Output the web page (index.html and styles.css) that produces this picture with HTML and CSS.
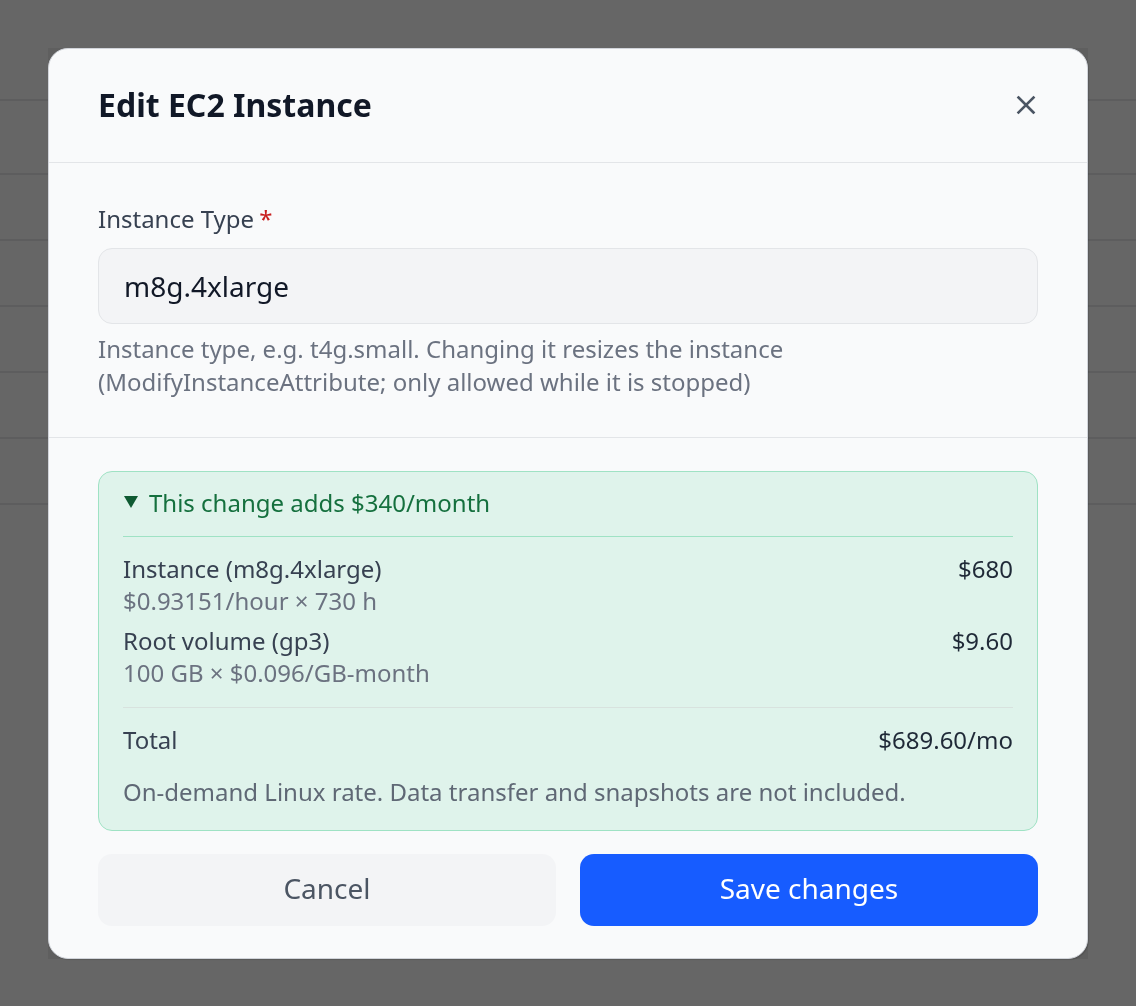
FILE: index.html
```html
<!DOCTYPE html>
<html lang="en">
<head>
<meta charset="utf-8">
<title>Edit EC2 Instance</title>
<link rel="stylesheet" href="styles.css">
</head>
<body>
<div class="page">
  <div class="bg-head"></div>
  <div class="bg-row bg-row-first"></div>
  <div class="bg-row"></div>
  <div class="bg-row"></div>
  <div class="bg-row"></div>
  <div class="bg-row"></div>
  <div class="bg-row"></div>
</div>
<div class="overlay">
  <div class="dialog-frame">
    <div class="dialog" role="dialog" aria-labelledby="dlg-title">
      <div class="dialog-header">
        <h2 class="dialog-title" id="dlg-title">Edit EC2 Instance</h2>
        <button class="close-btn" type="button" aria-label="Close">
          <svg width="24" height="24" viewBox="0 0 24 24" fill="none" stroke="#4b5563" stroke-width="2.6" stroke-linecap="square"><path d="M4.5 4.5L19.5 19.5M19.5 4.5L4.5 19.5"/></svg>
        </button>
      </div>
      <div class="section section-field">
        <label class="field-label" for="itype">Instance Type<span class="req">*</span></label>
        <div class="input" id="itype">m8g.4xlarge</div>
        <p class="help">Instance type, e.g. t4g.small. Changing it resizes the instance (ModifyInstanceAttribute; only allowed while it is stopped)</p>
      </div>
      <div class="section section-cost">
        <div class="cost-box">
          <div class="cost-summary">
            <span class="tri"></span>
            <span>This change adds $340/month</span>
          </div>
          <div class="cost-lines">
            <div class="cost-row">
              <div>
                <div class="cost-main">Instance (m8g.4xlarge)</div>
                <div class="cost-sub">$0.93151/hour × 730 h</div>
              </div>
              <div class="cost-amount">$680</div>
            </div>
            <div class="cost-row">
              <div>
                <div class="cost-main">Root volume (gp3)</div>
                <div class="cost-sub">100 GB × $0.096/GB-month</div>
              </div>
              <div class="cost-amount">$9.60</div>
            </div>
          </div>
          <div class="cost-total">
            <span class="cost-main">Total</span>
            <span class="cost-amount">$689.60/mo</span>
          </div>
          <p class="cost-note">On-demand Linux rate. Data transfer and snapshots are not included.</p>
        </div>
        <div class="actions">
          <button class="btn btn-cancel" type="button">Cancel</button>
          <button class="btn btn-save" type="button">Save changes</button>
        </div>
      </div>
    </div>
  </div>
</div>
</body>
</html>
```

FILE: styles.css
```css
html, body {
  margin: 0;
  padding: 0;
}
body {
  font-family: "Noto Sans", "Open Sans", sans-serif;
  background: #ffffff;
  width: 1136px;
  height: 1006px;
  overflow: hidden;
}
.page {
  background: #ffffff;
  height: 1006px;
}
.bg-head {
  height: 99px;
  border-bottom: 2px solid #e8e9eb;
}
.bg-row {
  height: 64px;
  border-bottom: 2px solid #e8e9eb;
}
.bg-row-first {
  height: 72px;
}
.overlay {
  position: fixed;
  inset: 0;
  background: rgba(0, 0, 0, 0.6);
  display: flex;
  align-items: center;
  justify-content: center;
}
.dialog-frame {
  background: rgba(0, 0, 0, 0.07);
}
.dialog {
  width: 1040px;
  box-sizing: border-box;
  background: #f9fafb;
  border: 1.5px solid #d1d4da;
  border-radius: 20px;
  box-shadow: 1px 1px 1px rgba(0, 0, 0, 0.14);
}
.dialog-header {
  height: 113px;
  padding: 0 49px;
  display: flex;
  align-items: center;
  justify-content: space-between;
  border-bottom: 1.5px solid #e3e5e8;
}
.dialog-title {
  margin: 0;
  font-size: 32px;
  line-height: 42px;
  font-weight: 700;
  color: #111827;
}
.close-btn {
  border: 0;
  background: transparent;
  padding: 0;
  width: 24px;
  height: 24px;
  display: flex;
  cursor: pointer;
}
.section {
  padding-left: 49px;
  padding-right: 49px;
}
.section-field {
  padding-top: 38px;
  padding-bottom: 39px;
  border-bottom: 1.5px solid #e3e5e8;
}
.field-label {
  display: block;
  font-size: 24px;
  line-height: 36px;
  color: #374151;
  margin-bottom: 11px;
}
.req {
  color: #c81e1e;
  margin-left: 5px;
}
.input {
  height: 76px;
  box-sizing: border-box;
  border: 1.5px solid #e3e5e8;
  background: #f3f4f6;
  border-radius: 14px;
  padding: 0 25px;
  display: flex;
  align-items: center;
  font-size: 28px;
  color: #111827;
}
.help {
  margin: 8px 0 0;
  font-size: 24px;
  line-height: 33px;
  color: #6b7280;
}
.section-cost {
  padding-top: 33px;
  padding-bottom: 32px;
}
.cost-box {
  border: 1.5px solid #9fe2c4;
  background: #dff3eb;
  border-radius: 14px;
  padding: 14px 24px 22px;
  font-size: 24px;
}
.cost-summary {
  display: flex;
  align-items: center;
  gap: 11px;
  line-height: 33px;
  color: #15703e;
  padding-bottom: 17px;
  border-bottom: 1.5px solid #9fe2c4;
}
.tri {
  width: 0;
  height: 0;
  border-left: 7px solid transparent;
  border-right: 7px solid transparent;
  border-top: 12px solid #0f5a32;
  margin-left: 1px;
}
.cost-lines {
  padding-top: 16px;
  padding-bottom: 18px;
  display: flex;
  flex-direction: column;
  gap: 8px;
  border-bottom: 1.5px solid #d8e2de;
}
.cost-row {
  display: flex;
  justify-content: space-between;
  align-items: flex-start;
}
.cost-main {
  line-height: 32px;
  color: #374151;
}
.cost-sub {
  line-height: 32px;
  color: #6b7280;
}
.cost-amount {
  line-height: 32px;
  color: #1f2937;
}
.cost-total {
  margin-top: 16px;
  display: flex;
  justify-content: space-between;
}
.cost-note {
  margin: 20px 0 0;
  line-height: 32px;
  color: #5f6875;
}
.actions {
  margin-top: 23px;
  display: grid;
  grid-template-columns: 1fr 1fr;
  gap: 24px;
}
.btn {
  height: 72px;
  border: 0;
  border-radius: 14px;
  padding: 0 0 3px;
  font-family: "Noto Sans", "Open Sans", sans-serif;
  font-size: 28px;
  cursor: pointer;
}
.btn-cancel {
  background: #f3f4f6;
  color: #4b5563;
}
.btn-save {
  background: #175cff;
  color: #ffffff;
}
```
